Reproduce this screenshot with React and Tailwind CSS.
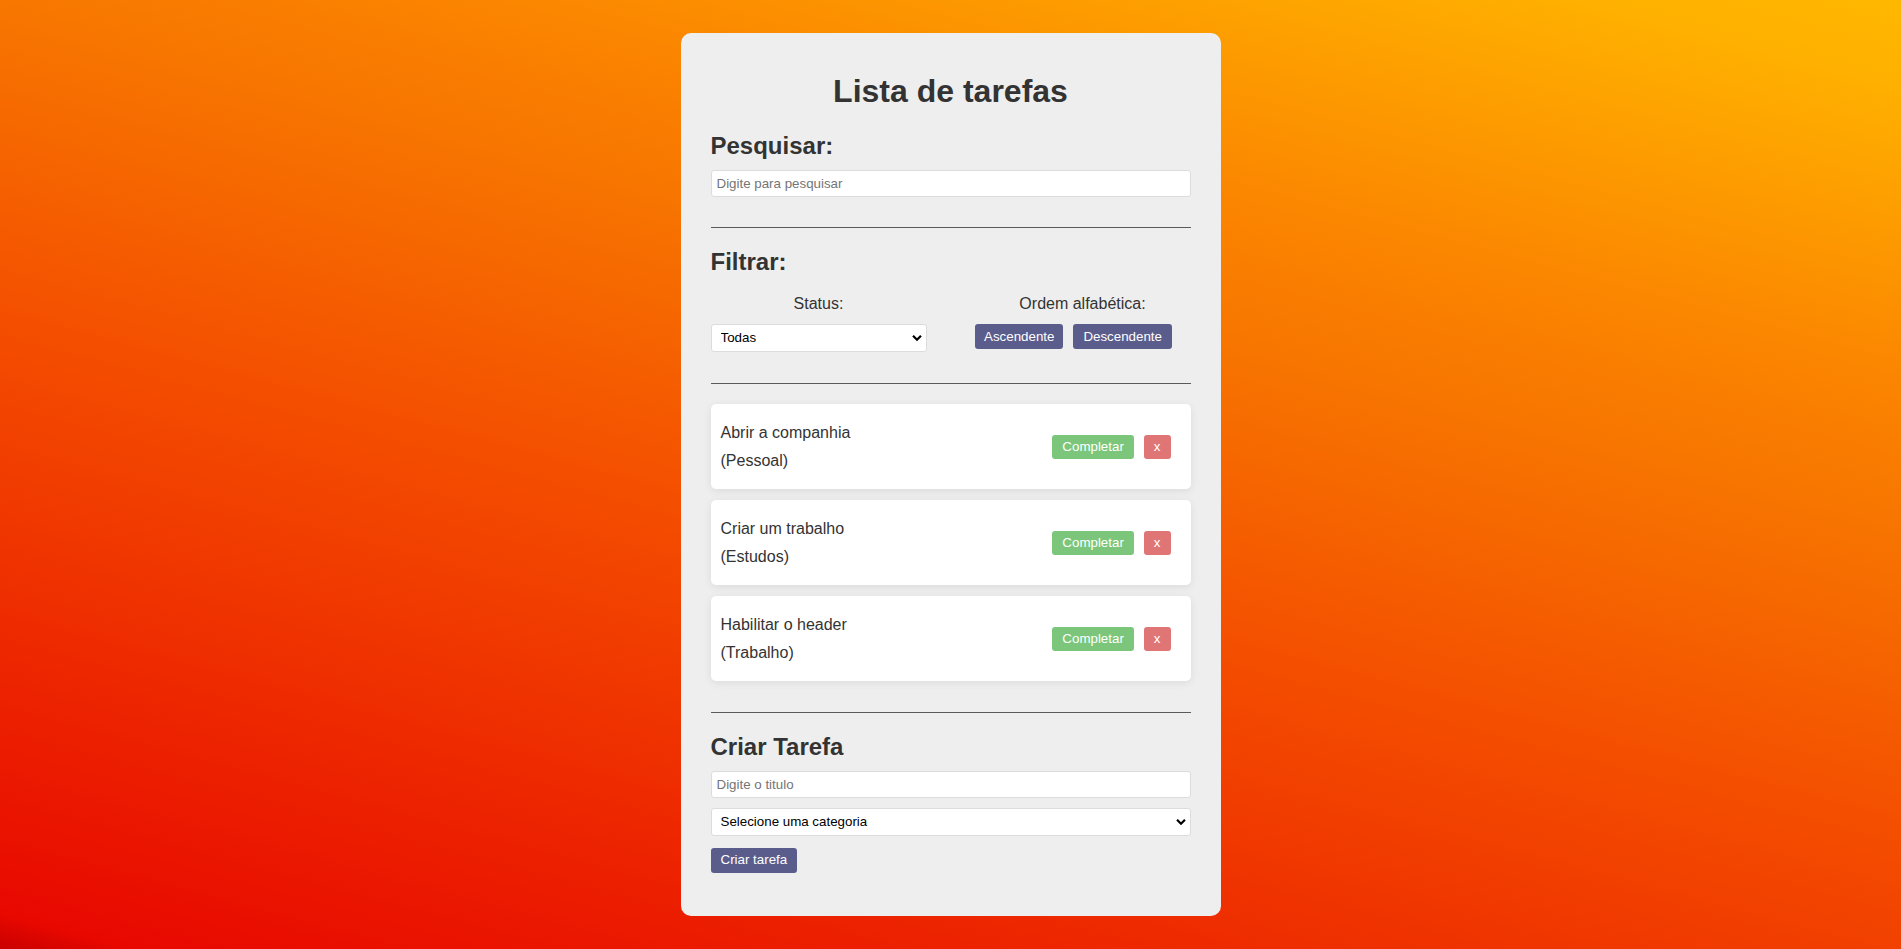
import React from "react";

const tasks = [
  { title: "Abrir a companhia", cat: "Pessoal" },
  { title: "Criar um trabalho", cat: "Estudos" },
  { title: "Habilitar o header", cat: "Trabalho" },
];

function Chevron() {
  return (
    <svg
      className="pointer-events-none absolute right-[5px] top-1/2 -translate-y-1/2"
      width="10"
      height="7"
      viewBox="0 0 10 7"
    >
      <path d="M1 1.2 L5 5.2 L9 1.2" fill="none" stroke="#000" strokeWidth="2.2" />
    </svg>
  );
}

function Select({ value, className }) {
  return (
    <div className={"relative " + className}>
      <select
        defaultValue={value}
        className="h-full w-full appearance-none rounded-[3px] border border-[#dcdcdc] bg-white pl-[9px] pr-[20px] text-[13.33px] text-black outline-none"
      >
        <option>{value}</option>
      </select>
      <Chevron />
    </div>
  );
}

function Hr({ className }) {
  return <div className={"h-px w-full bg-[#5a5a5a] " + className} />;
}

export default function App() {
  return (
    <div className="flex min-h-screen w-full justify-center bg-[linear-gradient(15deg,#c80000_0%,#e80800_2.5%,#f45000_44%,#f77500_64%,#fb8500_74%,#ffb000_94%,#ffb800_100%)] font-['Liberation_Sans',Arial,sans-serif] text-[#333]">
      <div className="mt-[33px] mb-[34px] flex w-[540px] flex-col self-start rounded-[10px] bg-[#eeeeee] px-[30px] pt-[30px] pb-[43px]">
        <h1 className="mt-[10px] text-center text-[32px] font-bold leading-[37px]">
          Lista de tarefas
        </h1>

        <h2 className="mt-[22px] text-[24px] font-bold leading-[28px]">Pesquisar:</h2>
        <input
          placeholder="Digite para pesquisar"
          className="mt-[10px] h-[27px] w-full rounded-[3px] border border-[#dcdcdc] bg-white px-[5px] text-[13.33px] text-black outline-none placeholder:text-[#757575]"
        />

        <Hr className="mt-[30px]" />

        <h2 className="mt-[20px] text-[24px] font-bold leading-[28px]">Filtrar:</h2>
        <div className="mt-[19px] flex">
          <div className="flex w-[216px] flex-col items-center">
            <div className="text-[16px] leading-[18px]">Status:</div>
            <Select value="Todas" className="mt-[11px] h-[28px] w-[216px]" />
          </div>
          <div className="ml-auto mr-[4px] flex w-[216px] flex-col items-center">
            <div className="pl-[8px] text-[16px] leading-[18px]">Ordem alfabética:</div>
            <div className="mt-[11px] flex gap-[10px] pr-[10px]">
              <button className="h-[25px] rounded-[3px] bg-[#5a5c8c] px-[9px] text-[13.33px] text-white">
                Ascendente
              </button>
              <button className="h-[25px] rounded-[3px] bg-[#5a5c8c] px-[10px] text-[13.33px] text-white">
                Descendente
              </button>
            </div>
          </div>
        </div>

        <Hr className="mt-[31px]" />

        <div className="mt-[20px] flex flex-col gap-[11px]">
          {tasks.map((t) => (
            <div
              key={t.title}
              className="flex items-center justify-between rounded-[5px] bg-white pt-[20px] pb-[19px] pl-[10px] pr-[20px] shadow-[0_2px_8px_rgba(0,0,0,0.08)]"
            >
              <div className="text-[16px] leading-[18px]">
                <div>{t.title}</div>
                <div className="mt-[10px]">({t.cat})</div>
              </div>
              <div className="flex gap-[10px]">
                <button className="h-[24px] rounded-[3px] bg-[#7bc67b] px-[10px] text-[13.33px] text-white">
                  Completar
                </button>
                <button className="h-[24px] rounded-[3px] bg-[#e07575] px-[10px] text-[13.33px] text-white">
                  x
                </button>
              </div>
            </div>
          ))}
        </div>

        <Hr className="mt-[31px]" />

        <h2 className="mt-[20px] text-[24px] font-bold leading-[28px]">Criar Tarefa</h2>
        <input
          placeholder="Digite o titulo"
          className="mt-[10px] h-[27px] w-full rounded-[3px] border border-[#dcdcdc] bg-white px-[5px] text-[13.33px] text-black outline-none placeholder:text-[#757575]"
        />
        <Select value="Selecione uma categoria" className="mt-[10px] h-[28px] w-full" />
        <div className="mt-[11px]">
          <button className="h-[25px] rounded-[3px] bg-[#5a5c8c] px-[10px] text-[13.33px] text-white">
            Criar tarefa
          </button>
        </div>
      </div>
    </div>
  );
}
